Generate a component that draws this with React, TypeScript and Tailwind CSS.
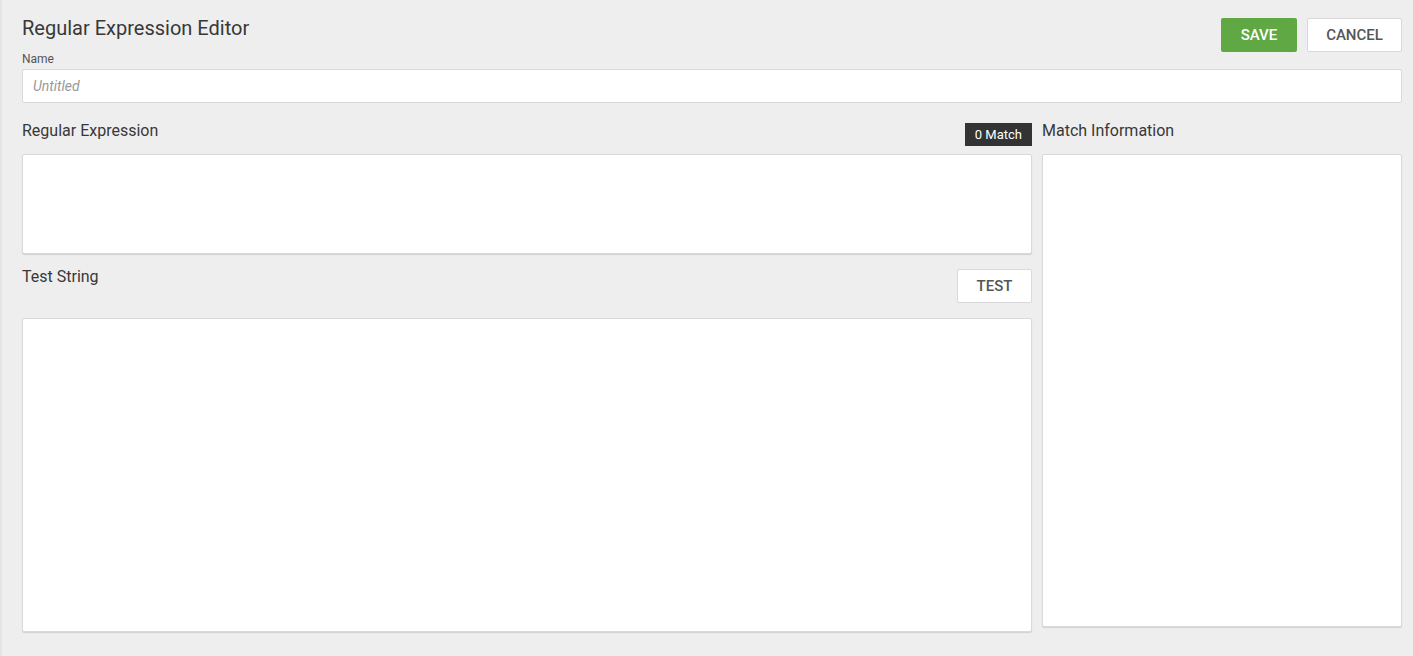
const Box = ({ className = "" }: { className?: string }) => (
  <div className={`bg-white border border-[#d9d9d9] rounded-[2px] shadow-[0_1px_1px_rgba(0,0,0,0.12)] ${className}`} />
);

const App = () => {
  return (
    <div className="min-h-[656px] bg-[#eeeeee] border-l-2 border-[#e4e4e4] font-['Roboto',sans-serif] text-[#383838] pl-[20px] pr-[11px]">
      <div className="flex items-start justify-between pt-[18px]">
        <h1 className="text-[20px] leading-[22px] mt-[-1px]">Regular Expression Editor</h1>
        <div className="flex gap-[10px]">
          <button className="h-[34px] w-[76px] bg-[#5fa844] text-white text-[15px] font-medium rounded-[2px]">SAVE</button>
          <button className="h-[34px] w-[95px] bg-white border border-[#d9d9d9] text-[#555] text-[15px] font-medium rounded-[2px]">CANCEL</button>
        </div>
      </div>
      <label className="block text-[12px] leading-[14px] text-[#555]">Name</label>
      <div className="mt-[3px] h-[34px] bg-white border border-[#d9d9d9] rounded-[2px] flex items-center px-[10px]">
        <span className="italic text-[14px] text-[#999]">Untitled</span>
      </div>
      <div className="flex gap-[10px] mt-[20px]">
        <div className="w-[1010px] flex flex-col">
          <div className="flex items-start justify-between h-[31px]">
            <span className="text-[16px] leading-[18px] mt-[-1px]">Regular Expression</span>
            <span className="bg-[#333] text-white text-[13px] h-[23px] px-[10px] flex items-center">0 Match</span>
          </div>
          <Box className="h-[100px]" />
          <div className="flex items-start justify-between mt-[15px] h-[49px]">
            <span className="text-[16px] leading-[18px] mt-[-1px]">Test String</span>
            <button className="h-[34px] w-[75px] bg-white border border-[#d9d9d9] text-[#555] text-[15px] font-medium rounded-[2px]">TEST</button>
          </div>
          <Box className="h-[314px]" />
        </div>
        <div className="w-[360px] flex flex-col">
          <div className="h-[31px]">
            <span className="text-[16px] leading-[18px] block mt-[-1px]">Match Information</span>
          </div>
          <Box className="h-[473px]" />
        </div>
      </div>
    </div>
  );
};

export default App;
